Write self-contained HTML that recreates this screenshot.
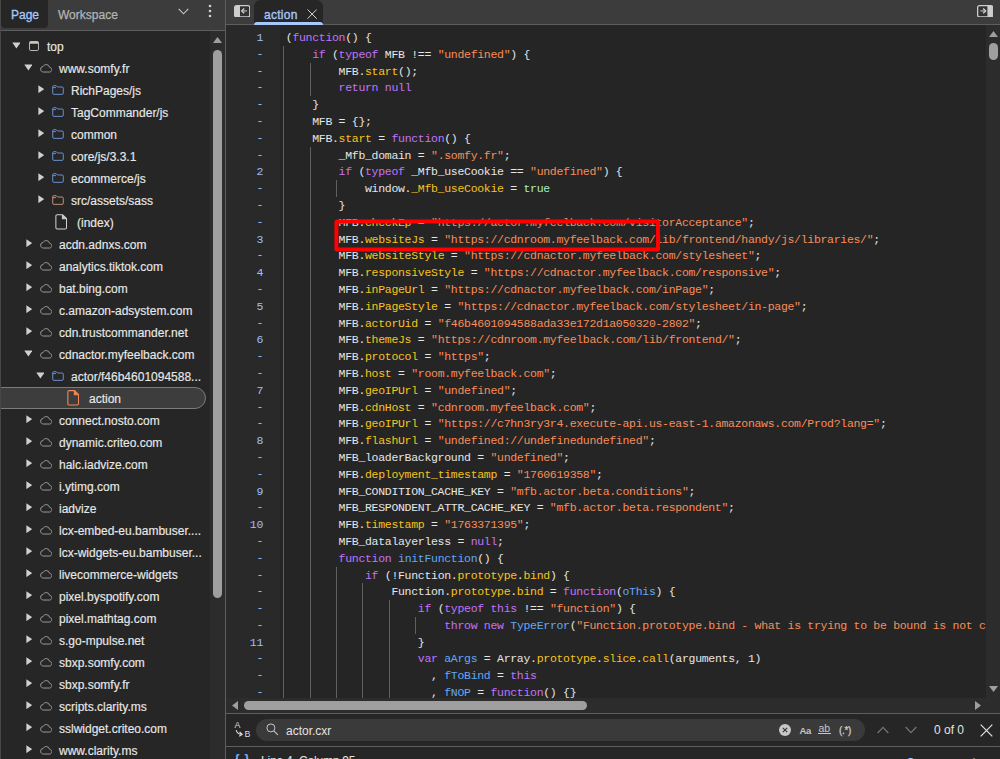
<!DOCTYPE html>
<html lang="en"><head><meta charset="utf-8"><title>DevTools - Sources</title>
<style>
*{box-sizing:border-box}
html,body{margin:0;padding:0;background:#262626}
body{width:1000px;height:759px;overflow:hidden;background:#262626;position:relative;font:12px/16px "Liberation Sans",sans-serif;color:#e3e3e3}
.abs{position:absolute}
/* left panel */
#left{position:absolute;left:0;top:0;width:225px;height:759px;background:#262626;overflow:hidden;border-left:1px solid #474747}
#ltabs{position:absolute;left:0;top:0;width:225px;height:31px;background:#3c3c3c;border-bottom:1px solid #5e5e5e}
#ptab{position:absolute;left:0;top:-4px;width:47px;height:32px;background:#262626;border-radius:4px;color:#a8c7fa;}
#ptab span{position:absolute;left:10px;top:11px;font-weight:normal;-webkit-text-stroke:0.3px #a8c7fa}
#wtab{position:absolute;left:57px;top:7px;color:#b4b4b4;-webkit-text-stroke:0.25px #b4b4b4}
.row{position:absolute;left:0;width:213px;height:22px}
.row.sel{left:-12px;width:218px;background:#3d3d3d;border:1px solid #7b7b7b;border-radius:11px;height:22px}
.row.sel .ic,.row.sel .tx{margin-left:11px;margin-top:-1px}
.row .ar,.row .ic{position:absolute}
  .row .tx{position:absolute;top:4px;white-space:nowrap;color:#e8e8e8;-webkit-text-stroke:0.15px}
#lscroll{position:absolute;left:209px;top:31px;width:16px;height:728px;background:#2c2c2c}
#lthumb{position:absolute;left:3px;top:19px;width:9px;height:548px;border-radius:4.5px;background:#9f9f9f}
#vdiv{position:absolute;left:225px;top:0;width:1px;height:759px;background:#5e5e5e}
/* right */
#rtabs{position:absolute;left:226px;top:0;width:774px;height:25px;background:#3c3c3c;border-bottom:1px solid #5e5e5e}
#atab{position:absolute;left:28px;top:0;width:69px;height:25px;background:#262626;border-radius:6.5px 6.5px 0 0;}
#atab span{position:absolute;left:10px;top:6.5px;color:#a8c7fa;-webkit-text-stroke:0.35px #a8c7fa;letter-spacing:0.28px}
#atab i{position:absolute;left:0;bottom:0;width:69px;height:3px;background:#a8c7fa;border-radius:3px 3px 0 0}
#editor{position:absolute;left:226px;top:25px;width:760px;height:673px;background:#252525;overflow:hidden}
#gutter{position:absolute;left:0;top:5px;width:37px;text-align:right;color:#9cc0fa;font:11.5px/16.8px "Liberation Mono",monospace;letter-spacing:-0.3px}
#gutter div{height:16.8px}
#gutter b{font-weight:normal;position:relative;top:-1px}
#code{position:absolute;left:59.8px;top:5px;font:11.5px/16.8px "Liberation Mono",monospace;letter-spacing:-0.3px;color:#e6e6e6}
.ln{height:16.8px;position:relative;white-space:pre}
.g{position:absolute;top:-1px;width:1px;height:16.8px;background:#606060}
.k{color:#c273fb}.p{color:#f6c31e}.s{color:#f98d59}.d{color:#62a8f8}.a{color:#a5f0c0}.t{color:#62a8f8}
#redbox{position:absolute;left:334.5px;top:219.5px;width:325.5px;height:32px;border:4px solid #fe0000;border-radius:1.5px}
#vscroll{position:absolute;left:986px;top:25px;width:14px;height:673px;background:#2c2c2c}
#vthumb{position:absolute;left:3px;top:18px;width:9px;height:17px;border-radius:4.5px;background:#9f9f9f}
#hscroll{position:absolute;left:226px;top:698px;width:774px;height:15px;background:#2c2c2c}
#hthumb{position:absolute;left:18px;top:3px;width:343px;height:9px;border-radius:4.5px;background:#9f9f9f}
.hline{position:absolute;left:226px;width:774px;height:1px;background:#5e5e5e}
#search{position:absolute;left:226px;top:714px;width:774px;height:32px;background:#262626}
#pill{position:absolute;left:30px;top:5px;width:609px;height:22px;border-radius:11px;background:#3a3a3a}
#status{position:absolute;left:226px;top:747px;width:774px;height:12px;background:#262626;overflow:hidden}
</style></head><body>
<div id="left">
 <div id="ltabs">
  <div id="ptab"><span>Page</span></div>
  <div id="wtab">Workspace</div>
  <svg class="abs" style="left:177px;top:7.5px" width="11" height="7" viewBox="0 0 11 7"><path d="M0.7 0.8 L5.5 5.8 L10.3 0.8" fill="none" stroke="#c7c7c7" stroke-width="1.1"/></svg>
  <svg class="abs" style="left:207px;top:4px" width="4" height="14" viewBox="0 0 4 14"><circle cx="2" cy="2" r="1.3" fill="#d0d0d0"/><circle cx="2" cy="7" r="1.3" fill="#d0d0d0"/><circle cx="2" cy="12" r="1.3" fill="#d0d0d0"/></svg>
 </div>
 <div style="position:absolute;left:-1px;top:0;width:226px;height:759px">
<div class="row" style="top:35px"><svg class="ar" style="left:11.5px;top:7px" width="8.8" height="6.7" viewBox="0 0 9 7"><path d="M0.2 0.4 H8.8 L4.5 6.8 Z" fill="#d0d0d0"/></svg><svg class="ic" style="left:29.0px;top:6.0px" width="10" height="10" viewBox="0 0 10 10"><rect x="0.5" y="0.5" width="9" height="9" rx="1.3" fill="none" stroke="#c7c7c7" stroke-width="0.9"/><rect x="0.5" y="0.5" width="9" height="2.2" rx="1" fill="#c7c7c7"/></svg><span class="tx" style="left:47px">top</span></div>
<div class="row" style="top:57px"><svg class="ar" style="left:23.5px;top:7px" width="8.8" height="6.7" viewBox="0 0 9 7"><path d="M0.2 0.4 H8.8 L4.5 6.8 Z" fill="#d0d0d0"/></svg><svg class="ic" style="left:39.8px;top:7.1px" width="12.4" height="8.6" viewBox="-1.2 2.8 26.4 18.4"><path d="M19.35 10.04A7.49 7.49 0 0 0 12 4C9.11 4 6.6 5.64 5.35 8.04A5.994 5.994 0 0 0 0 14c0 3.31 2.69 6 6 6h13c2.76 0 5-2.24 5-5 0-2.64-2.05-4.78-4.65-4.96z" fill="none" stroke="#a2a2a2" stroke-width="2"/></svg><span class="tx" style="left:59px">www.somfy.fr</span></div>
<div class="row" style="top:79px"><svg class="ar" style="left:37.5px;top:5.6px" width="6.4" height="8.4" viewBox="0 0 7 9"><path d="M0.4 0.2 V8.8 L6.8 4.5 Z" fill="#d0d0d0"/></svg><svg class="ic" style="left:52.0px;top:6.2px" width="12" height="10" viewBox="0 0 13 11"><path d="M1.5 0.8 H4.6 L5.9 2.2 H11 Q12.3 2.2 12.3 3.5 V9 Q12.3 10.3 11 10.3 H2 Q0.7 10.3 0.7 9 V1.8 Q0.7 0.8 1.5 0.8 Z M0.7 2.9 H4.2" fill="none" stroke="#6f9be0" stroke-width="1"/></svg><span class="tx" style="left:71px">RichPages/js</span></div>
<div class="row" style="top:101px"><svg class="ar" style="left:37.5px;top:5.6px" width="6.4" height="8.4" viewBox="0 0 7 9"><path d="M0.4 0.2 V8.8 L6.8 4.5 Z" fill="#d0d0d0"/></svg><svg class="ic" style="left:52.0px;top:6.2px" width="12" height="10" viewBox="0 0 13 11"><path d="M1.5 0.8 H4.6 L5.9 2.2 H11 Q12.3 2.2 12.3 3.5 V9 Q12.3 10.3 11 10.3 H2 Q0.7 10.3 0.7 9 V1.8 Q0.7 0.8 1.5 0.8 Z M0.7 2.9 H4.2" fill="none" stroke="#6f9be0" stroke-width="1"/></svg><span class="tx" style="left:71px">TagCommander/js</span></div>
<div class="row" style="top:123px"><svg class="ar" style="left:37.5px;top:5.6px" width="6.4" height="8.4" viewBox="0 0 7 9"><path d="M0.4 0.2 V8.8 L6.8 4.5 Z" fill="#d0d0d0"/></svg><svg class="ic" style="left:52.0px;top:6.2px" width="12" height="10" viewBox="0 0 13 11"><path d="M1.5 0.8 H4.6 L5.9 2.2 H11 Q12.3 2.2 12.3 3.5 V9 Q12.3 10.3 11 10.3 H2 Q0.7 10.3 0.7 9 V1.8 Q0.7 0.8 1.5 0.8 Z M0.7 2.9 H4.2" fill="none" stroke="#6f9be0" stroke-width="1"/></svg><span class="tx" style="left:71px">common</span></div>
<div class="row" style="top:145px"><svg class="ar" style="left:37.5px;top:5.6px" width="6.4" height="8.4" viewBox="0 0 7 9"><path d="M0.4 0.2 V8.8 L6.8 4.5 Z" fill="#d0d0d0"/></svg><svg class="ic" style="left:52.0px;top:6.2px" width="12" height="10" viewBox="0 0 13 11"><path d="M1.5 0.8 H4.6 L5.9 2.2 H11 Q12.3 2.2 12.3 3.5 V9 Q12.3 10.3 11 10.3 H2 Q0.7 10.3 0.7 9 V1.8 Q0.7 0.8 1.5 0.8 Z M0.7 2.9 H4.2" fill="none" stroke="#6f9be0" stroke-width="1"/></svg><span class="tx" style="left:71px">core/js/3.3.1</span></div>
<div class="row" style="top:167px"><svg class="ar" style="left:37.5px;top:5.6px" width="6.4" height="8.4" viewBox="0 0 7 9"><path d="M0.4 0.2 V8.8 L6.8 4.5 Z" fill="#d0d0d0"/></svg><svg class="ic" style="left:52.0px;top:6.2px" width="12" height="10" viewBox="0 0 13 11"><path d="M1.5 0.8 H4.6 L5.9 2.2 H11 Q12.3 2.2 12.3 3.5 V9 Q12.3 10.3 11 10.3 H2 Q0.7 10.3 0.7 9 V1.8 Q0.7 0.8 1.5 0.8 Z M0.7 2.9 H4.2" fill="none" stroke="#6f9be0" stroke-width="1"/></svg><span class="tx" style="left:71px">ecommerce/js</span></div>
<div class="row" style="top:189px"><svg class="ar" style="left:37.5px;top:5.6px" width="6.4" height="8.4" viewBox="0 0 7 9"><path d="M0.4 0.2 V8.8 L6.8 4.5 Z" fill="#d0d0d0"/></svg><svg class="ic" style="left:52.0px;top:6.2px" width="12" height="10" viewBox="0 0 13 11"><path d="M1.5 0.8 H4.6 L5.9 2.2 H11 Q12.3 2.2 12.3 3.5 V9 Q12.3 10.3 11 10.3 H2 Q0.7 10.3 0.7 9 V1.8 Q0.7 0.8 1.5 0.8 Z M0.7 2.9 H4.2" fill="none" stroke="#d19a82" stroke-width="1"/></svg><span class="tx" style="left:71px">src/assets/sass</span></div>
<div class="row" style="top:211px"><svg class="ic" style="left:54.8px;top:3.2px" width="12.4" height="15.6" viewBox="0 0 13 17"><path d="M2 0.7 H8 L12.3 5 V15 Q12.3 16.3 11 16.3 H2 Q0.7 16.3 0.7 15 V2 Q0.7 0.7 2 0.7 Z M7.8 0.9 V5.2 H12.1" fill="none" stroke="#d2d2d2" stroke-width="1.1"/><path d="M8 1 L12 5 H8 Z" fill="#d2d2d2"/></svg><span class="tx" style="left:77px">(index)</span></div>
<div class="row" style="top:233px"><svg class="ar" style="left:25.5px;top:5.6px" width="6.4" height="8.4" viewBox="0 0 7 9"><path d="M0.4 0.2 V8.8 L6.8 4.5 Z" fill="#d0d0d0"/></svg><svg class="ic" style="left:39.8px;top:7.1px" width="12.4" height="8.6" viewBox="-1.2 2.8 26.4 18.4"><path d="M19.35 10.04A7.49 7.49 0 0 0 12 4C9.11 4 6.6 5.64 5.35 8.04A5.994 5.994 0 0 0 0 14c0 3.31 2.69 6 6 6h13c2.76 0 5-2.24 5-5 0-2.64-2.05-4.78-4.65-4.96z" fill="none" stroke="#a2a2a2" stroke-width="2"/></svg><span class="tx" style="left:59px">acdn.adnxs.com</span></div>
<div class="row" style="top:255px"><svg class="ar" style="left:25.5px;top:5.6px" width="6.4" height="8.4" viewBox="0 0 7 9"><path d="M0.4 0.2 V8.8 L6.8 4.5 Z" fill="#d0d0d0"/></svg><svg class="ic" style="left:39.8px;top:7.1px" width="12.4" height="8.6" viewBox="-1.2 2.8 26.4 18.4"><path d="M19.35 10.04A7.49 7.49 0 0 0 12 4C9.11 4 6.6 5.64 5.35 8.04A5.994 5.994 0 0 0 0 14c0 3.31 2.69 6 6 6h13c2.76 0 5-2.24 5-5 0-2.64-2.05-4.78-4.65-4.96z" fill="none" stroke="#a2a2a2" stroke-width="2"/></svg><span class="tx" style="left:59px">analytics.tiktok.com</span></div>
<div class="row" style="top:277px"><svg class="ar" style="left:25.5px;top:5.6px" width="6.4" height="8.4" viewBox="0 0 7 9"><path d="M0.4 0.2 V8.8 L6.8 4.5 Z" fill="#d0d0d0"/></svg><svg class="ic" style="left:39.8px;top:7.1px" width="12.4" height="8.6" viewBox="-1.2 2.8 26.4 18.4"><path d="M19.35 10.04A7.49 7.49 0 0 0 12 4C9.11 4 6.6 5.64 5.35 8.04A5.994 5.994 0 0 0 0 14c0 3.31 2.69 6 6 6h13c2.76 0 5-2.24 5-5 0-2.64-2.05-4.78-4.65-4.96z" fill="none" stroke="#a2a2a2" stroke-width="2"/></svg><span class="tx" style="left:59px">bat.bing.com</span></div>
<div class="row" style="top:299px"><svg class="ar" style="left:25.5px;top:5.6px" width="6.4" height="8.4" viewBox="0 0 7 9"><path d="M0.4 0.2 V8.8 L6.8 4.5 Z" fill="#d0d0d0"/></svg><svg class="ic" style="left:39.8px;top:7.1px" width="12.4" height="8.6" viewBox="-1.2 2.8 26.4 18.4"><path d="M19.35 10.04A7.49 7.49 0 0 0 12 4C9.11 4 6.6 5.64 5.35 8.04A5.994 5.994 0 0 0 0 14c0 3.31 2.69 6 6 6h13c2.76 0 5-2.24 5-5 0-2.64-2.05-4.78-4.65-4.96z" fill="none" stroke="#a2a2a2" stroke-width="2"/></svg><span class="tx" style="left:59px">c.amazon-adsystem.com</span></div>
<div class="row" style="top:321px"><svg class="ar" style="left:25.5px;top:5.6px" width="6.4" height="8.4" viewBox="0 0 7 9"><path d="M0.4 0.2 V8.8 L6.8 4.5 Z" fill="#d0d0d0"/></svg><svg class="ic" style="left:39.8px;top:7.1px" width="12.4" height="8.6" viewBox="-1.2 2.8 26.4 18.4"><path d="M19.35 10.04A7.49 7.49 0 0 0 12 4C9.11 4 6.6 5.64 5.35 8.04A5.994 5.994 0 0 0 0 14c0 3.31 2.69 6 6 6h13c2.76 0 5-2.24 5-5 0-2.64-2.05-4.78-4.65-4.96z" fill="none" stroke="#a2a2a2" stroke-width="2"/></svg><span class="tx" style="left:59px">cdn.trustcommander.net</span></div>
<div class="row" style="top:343px"><svg class="ar" style="left:23.5px;top:7px" width="8.8" height="6.7" viewBox="0 0 9 7"><path d="M0.2 0.4 H8.8 L4.5 6.8 Z" fill="#d0d0d0"/></svg><svg class="ic" style="left:39.8px;top:7.1px" width="12.4" height="8.6" viewBox="-1.2 2.8 26.4 18.4"><path d="M19.35 10.04A7.49 7.49 0 0 0 12 4C9.11 4 6.6 5.64 5.35 8.04A5.994 5.994 0 0 0 0 14c0 3.31 2.69 6 6 6h13c2.76 0 5-2.24 5-5 0-2.64-2.05-4.78-4.65-4.96z" fill="none" stroke="#a2a2a2" stroke-width="2"/></svg><span class="tx" style="left:59px">cdnactor.myfeelback.com</span></div>
<div class="row" style="top:365px"><svg class="ar" style="left:35.5px;top:7px" width="8.8" height="6.7" viewBox="0 0 9 7"><path d="M0.2 0.4 H8.8 L4.5 6.8 Z" fill="#d0d0d0"/></svg><svg class="ic" style="left:52.0px;top:6.2px" width="12" height="10" viewBox="0 0 13 11"><path d="M1.5 0.8 H4.6 L5.9 2.2 H11 Q12.3 2.2 12.3 3.5 V9 Q12.3 10.3 11 10.3 H2 Q0.7 10.3 0.7 9 V1.8 Q0.7 0.8 1.5 0.8 Z M0.7 2.9 H4.2" fill="none" stroke="#6f9be0" stroke-width="1"/></svg><span class="tx" style="left:71px">actor/f46b4601094588...</span></div>
<div class="row sel" style="top:387px"><svg class="ic" style="left:66.8px;top:3.2px" width="12.4" height="15.6" viewBox="0 0 13 17"><path d="M2 0.7 H8 L12.3 5 V15 Q12.3 16.3 11 16.3 H2 Q0.7 16.3 0.7 15 V2 Q0.7 0.7 2 0.7 Z M7.8 0.9 V5.2 H12.1" fill="none" stroke="#ee8a55" stroke-width="1.2"/><path d="M8 1 L12 5 H8 Z" fill="#ee8a55"/></svg><span class="tx" style="left:89px">action</span></div>
<div class="row" style="top:409px"><svg class="ar" style="left:25.5px;top:5.6px" width="6.4" height="8.4" viewBox="0 0 7 9"><path d="M0.4 0.2 V8.8 L6.8 4.5 Z" fill="#d0d0d0"/></svg><svg class="ic" style="left:39.8px;top:7.1px" width="12.4" height="8.6" viewBox="-1.2 2.8 26.4 18.4"><path d="M19.35 10.04A7.49 7.49 0 0 0 12 4C9.11 4 6.6 5.64 5.35 8.04A5.994 5.994 0 0 0 0 14c0 3.31 2.69 6 6 6h13c2.76 0 5-2.24 5-5 0-2.64-2.05-4.78-4.65-4.96z" fill="none" stroke="#a2a2a2" stroke-width="2"/></svg><span class="tx" style="left:59px">connect.nosto.com</span></div>
<div class="row" style="top:431px"><svg class="ar" style="left:25.5px;top:5.6px" width="6.4" height="8.4" viewBox="0 0 7 9"><path d="M0.4 0.2 V8.8 L6.8 4.5 Z" fill="#d0d0d0"/></svg><svg class="ic" style="left:39.8px;top:7.1px" width="12.4" height="8.6" viewBox="-1.2 2.8 26.4 18.4"><path d="M19.35 10.04A7.49 7.49 0 0 0 12 4C9.11 4 6.6 5.64 5.35 8.04A5.994 5.994 0 0 0 0 14c0 3.31 2.69 6 6 6h13c2.76 0 5-2.24 5-5 0-2.64-2.05-4.78-4.65-4.96z" fill="none" stroke="#a2a2a2" stroke-width="2"/></svg><span class="tx" style="left:59px">dynamic.criteo.com</span></div>
<div class="row" style="top:453px"><svg class="ar" style="left:25.5px;top:5.6px" width="6.4" height="8.4" viewBox="0 0 7 9"><path d="M0.4 0.2 V8.8 L6.8 4.5 Z" fill="#d0d0d0"/></svg><svg class="ic" style="left:39.8px;top:7.1px" width="12.4" height="8.6" viewBox="-1.2 2.8 26.4 18.4"><path d="M19.35 10.04A7.49 7.49 0 0 0 12 4C9.11 4 6.6 5.64 5.35 8.04A5.994 5.994 0 0 0 0 14c0 3.31 2.69 6 6 6h13c2.76 0 5-2.24 5-5 0-2.64-2.05-4.78-4.65-4.96z" fill="none" stroke="#a2a2a2" stroke-width="2"/></svg><span class="tx" style="left:59px">halc.iadvize.com</span></div>
<div class="row" style="top:475px"><svg class="ar" style="left:25.5px;top:5.6px" width="6.4" height="8.4" viewBox="0 0 7 9"><path d="M0.4 0.2 V8.8 L6.8 4.5 Z" fill="#d0d0d0"/></svg><svg class="ic" style="left:39.8px;top:7.1px" width="12.4" height="8.6" viewBox="-1.2 2.8 26.4 18.4"><path d="M19.35 10.04A7.49 7.49 0 0 0 12 4C9.11 4 6.6 5.64 5.35 8.04A5.994 5.994 0 0 0 0 14c0 3.31 2.69 6 6 6h13c2.76 0 5-2.24 5-5 0-2.64-2.05-4.78-4.65-4.96z" fill="none" stroke="#a2a2a2" stroke-width="2"/></svg><span class="tx" style="left:59px">i.ytimg.com</span></div>
<div class="row" style="top:497px"><svg class="ar" style="left:25.5px;top:5.6px" width="6.4" height="8.4" viewBox="0 0 7 9"><path d="M0.4 0.2 V8.8 L6.8 4.5 Z" fill="#d0d0d0"/></svg><svg class="ic" style="left:39.8px;top:7.1px" width="12.4" height="8.6" viewBox="-1.2 2.8 26.4 18.4"><path d="M19.35 10.04A7.49 7.49 0 0 0 12 4C9.11 4 6.6 5.64 5.35 8.04A5.994 5.994 0 0 0 0 14c0 3.31 2.69 6 6 6h13c2.76 0 5-2.24 5-5 0-2.64-2.05-4.78-4.65-4.96z" fill="none" stroke="#a2a2a2" stroke-width="2"/></svg><span class="tx" style="left:59px">iadvize</span></div>
<div class="row" style="top:519px"><svg class="ar" style="left:25.5px;top:5.6px" width="6.4" height="8.4" viewBox="0 0 7 9"><path d="M0.4 0.2 V8.8 L6.8 4.5 Z" fill="#d0d0d0"/></svg><svg class="ic" style="left:39.8px;top:7.1px" width="12.4" height="8.6" viewBox="-1.2 2.8 26.4 18.4"><path d="M19.35 10.04A7.49 7.49 0 0 0 12 4C9.11 4 6.6 5.64 5.35 8.04A5.994 5.994 0 0 0 0 14c0 3.31 2.69 6 6 6h13c2.76 0 5-2.24 5-5 0-2.64-2.05-4.78-4.65-4.96z" fill="none" stroke="#a2a2a2" stroke-width="2"/></svg><span class="tx" style="left:59px">lcx-embed-eu.bambuser....</span></div>
<div class="row" style="top:541px"><svg class="ar" style="left:25.5px;top:5.6px" width="6.4" height="8.4" viewBox="0 0 7 9"><path d="M0.4 0.2 V8.8 L6.8 4.5 Z" fill="#d0d0d0"/></svg><svg class="ic" style="left:39.8px;top:7.1px" width="12.4" height="8.6" viewBox="-1.2 2.8 26.4 18.4"><path d="M19.35 10.04A7.49 7.49 0 0 0 12 4C9.11 4 6.6 5.64 5.35 8.04A5.994 5.994 0 0 0 0 14c0 3.31 2.69 6 6 6h13c2.76 0 5-2.24 5-5 0-2.64-2.05-4.78-4.65-4.96z" fill="none" stroke="#a2a2a2" stroke-width="2"/></svg><span class="tx" style="left:59px">lcx-widgets-eu.bambuser...</span></div>
<div class="row" style="top:563px"><svg class="ar" style="left:25.5px;top:5.6px" width="6.4" height="8.4" viewBox="0 0 7 9"><path d="M0.4 0.2 V8.8 L6.8 4.5 Z" fill="#d0d0d0"/></svg><svg class="ic" style="left:39.8px;top:7.1px" width="12.4" height="8.6" viewBox="-1.2 2.8 26.4 18.4"><path d="M19.35 10.04A7.49 7.49 0 0 0 12 4C9.11 4 6.6 5.64 5.35 8.04A5.994 5.994 0 0 0 0 14c0 3.31 2.69 6 6 6h13c2.76 0 5-2.24 5-5 0-2.64-2.05-4.78-4.65-4.96z" fill="none" stroke="#a2a2a2" stroke-width="2"/></svg><span class="tx" style="left:59px">livecommerce-widgets</span></div>
<div class="row" style="top:585px"><svg class="ar" style="left:25.5px;top:5.6px" width="6.4" height="8.4" viewBox="0 0 7 9"><path d="M0.4 0.2 V8.8 L6.8 4.5 Z" fill="#d0d0d0"/></svg><svg class="ic" style="left:39.8px;top:7.1px" width="12.4" height="8.6" viewBox="-1.2 2.8 26.4 18.4"><path d="M19.35 10.04A7.49 7.49 0 0 0 12 4C9.11 4 6.6 5.64 5.35 8.04A5.994 5.994 0 0 0 0 14c0 3.31 2.69 6 6 6h13c2.76 0 5-2.24 5-5 0-2.64-2.05-4.78-4.65-4.96z" fill="none" stroke="#a2a2a2" stroke-width="2"/></svg><span class="tx" style="left:59px">pixel.byspotify.com</span></div>
<div class="row" style="top:607px"><svg class="ar" style="left:25.5px;top:5.6px" width="6.4" height="8.4" viewBox="0 0 7 9"><path d="M0.4 0.2 V8.8 L6.8 4.5 Z" fill="#d0d0d0"/></svg><svg class="ic" style="left:39.8px;top:7.1px" width="12.4" height="8.6" viewBox="-1.2 2.8 26.4 18.4"><path d="M19.35 10.04A7.49 7.49 0 0 0 12 4C9.11 4 6.6 5.64 5.35 8.04A5.994 5.994 0 0 0 0 14c0 3.31 2.69 6 6 6h13c2.76 0 5-2.24 5-5 0-2.64-2.05-4.78-4.65-4.96z" fill="none" stroke="#a2a2a2" stroke-width="2"/></svg><span class="tx" style="left:59px">pixel.mathtag.com</span></div>
<div class="row" style="top:629px"><svg class="ar" style="left:25.5px;top:5.6px" width="6.4" height="8.4" viewBox="0 0 7 9"><path d="M0.4 0.2 V8.8 L6.8 4.5 Z" fill="#d0d0d0"/></svg><svg class="ic" style="left:39.8px;top:7.1px" width="12.4" height="8.6" viewBox="-1.2 2.8 26.4 18.4"><path d="M19.35 10.04A7.49 7.49 0 0 0 12 4C9.11 4 6.6 5.64 5.35 8.04A5.994 5.994 0 0 0 0 14c0 3.31 2.69 6 6 6h13c2.76 0 5-2.24 5-5 0-2.64-2.05-4.78-4.65-4.96z" fill="none" stroke="#a2a2a2" stroke-width="2"/></svg><span class="tx" style="left:59px">s.go-mpulse.net</span></div>
<div class="row" style="top:651px"><svg class="ar" style="left:25.5px;top:5.6px" width="6.4" height="8.4" viewBox="0 0 7 9"><path d="M0.4 0.2 V8.8 L6.8 4.5 Z" fill="#d0d0d0"/></svg><svg class="ic" style="left:39.8px;top:7.1px" width="12.4" height="8.6" viewBox="-1.2 2.8 26.4 18.4"><path d="M19.35 10.04A7.49 7.49 0 0 0 12 4C9.11 4 6.6 5.64 5.35 8.04A5.994 5.994 0 0 0 0 14c0 3.31 2.69 6 6 6h13c2.76 0 5-2.24 5-5 0-2.64-2.05-4.78-4.65-4.96z" fill="none" stroke="#a2a2a2" stroke-width="2"/></svg><span class="tx" style="left:59px">sbxp.somfy.com</span></div>
<div class="row" style="top:673px"><svg class="ar" style="left:25.5px;top:5.6px" width="6.4" height="8.4" viewBox="0 0 7 9"><path d="M0.4 0.2 V8.8 L6.8 4.5 Z" fill="#d0d0d0"/></svg><svg class="ic" style="left:39.8px;top:7.1px" width="12.4" height="8.6" viewBox="-1.2 2.8 26.4 18.4"><path d="M19.35 10.04A7.49 7.49 0 0 0 12 4C9.11 4 6.6 5.64 5.35 8.04A5.994 5.994 0 0 0 0 14c0 3.31 2.69 6 6 6h13c2.76 0 5-2.24 5-5 0-2.64-2.05-4.78-4.65-4.96z" fill="none" stroke="#a2a2a2" stroke-width="2"/></svg><span class="tx" style="left:59px">sbxp.somfy.fr</span></div>
<div class="row" style="top:695px"><svg class="ar" style="left:25.5px;top:5.6px" width="6.4" height="8.4" viewBox="0 0 7 9"><path d="M0.4 0.2 V8.8 L6.8 4.5 Z" fill="#d0d0d0"/></svg><svg class="ic" style="left:39.8px;top:7.1px" width="12.4" height="8.6" viewBox="-1.2 2.8 26.4 18.4"><path d="M19.35 10.04A7.49 7.49 0 0 0 12 4C9.11 4 6.6 5.64 5.35 8.04A5.994 5.994 0 0 0 0 14c0 3.31 2.69 6 6 6h13c2.76 0 5-2.24 5-5 0-2.64-2.05-4.78-4.65-4.96z" fill="none" stroke="#a2a2a2" stroke-width="2"/></svg><span class="tx" style="left:59px">scripts.clarity.ms</span></div>
<div class="row" style="top:717px"><svg class="ar" style="left:25.5px;top:5.6px" width="6.4" height="8.4" viewBox="0 0 7 9"><path d="M0.4 0.2 V8.8 L6.8 4.5 Z" fill="#d0d0d0"/></svg><svg class="ic" style="left:39.8px;top:7.1px" width="12.4" height="8.6" viewBox="-1.2 2.8 26.4 18.4"><path d="M19.35 10.04A7.49 7.49 0 0 0 12 4C9.11 4 6.6 5.64 5.35 8.04A5.994 5.994 0 0 0 0 14c0 3.31 2.69 6 6 6h13c2.76 0 5-2.24 5-5 0-2.64-2.05-4.78-4.65-4.96z" fill="none" stroke="#a2a2a2" stroke-width="2"/></svg><span class="tx" style="left:59px">sslwidget.criteo.com</span></div>
<div class="row" style="top:739px"><svg class="ar" style="left:25.5px;top:5.6px" width="6.4" height="8.4" viewBox="0 0 7 9"><path d="M0.4 0.2 V8.8 L6.8 4.5 Z" fill="#d0d0d0"/></svg><svg class="ic" style="left:39.8px;top:7.1px" width="12.4" height="8.6" viewBox="-1.2 2.8 26.4 18.4"><path d="M19.35 10.04A7.49 7.49 0 0 0 12 4C9.11 4 6.6 5.64 5.35 8.04A5.994 5.994 0 0 0 0 14c0 3.31 2.69 6 6 6h13c2.76 0 5-2.24 5-5 0-2.64-2.05-4.78-4.65-4.96z" fill="none" stroke="#a2a2a2" stroke-width="2"/></svg><span class="tx" style="left:59px">www.clarity.ms</span></div>

 </div>
 <div id="lscroll">
  <svg class="abs" style="left:3px;top:6px" width="9" height="6" viewBox="0 0 9 6"><path d="M4.5 0 L9 6 H0 Z" fill="#9f9f9f"/></svg>
  <div id="lthumb"></div>
 </div>
</div>
<div id="vdiv"></div>
<div id="rtabs">
 <svg class="abs" style="left:8px;top:4.7px" width="16.4" height="12.6" viewBox="0 0 16.4 12.6"><rect x="0.65" y="0.65" width="15.1" height="11.3" rx="1.8" fill="#323232" stroke="#cdcdcd" stroke-width="1.3"/><path d="M0.65 2.4 Q0.65 0.65 2.4 0.65 H6 V11.95 H2.4 Q0.65 11.95 0.65 10.2 Z" fill="#cdcdcd"/><path d="M10.2 3.6 L7.7 5.9 L10.2 8.2" fill="none" stroke="#d6d6d6" stroke-width="1.3"/><path d="M8.6 5.9 H13" fill="none" stroke="#b0b0b0" stroke-width="1.3"/></svg>
 <div id="atab"><span>action</span><i></i>
  <svg class="abs" style="left:53px;top:8.8px" width="10.2" height="10.2" viewBox="0 0 10.2 10.2"><path d="M0.5 0.5 L9.7 9.7 M9.7 0.5 L0.5 9.7" stroke="#d6d6d6" stroke-width="1"/></svg>
 </div>
 <svg class="abs" style="left:751px;top:4.7px" width="16.4" height="12.6" viewBox="0 0 16.4 12.6"><rect x="0.65" y="0.65" width="15.1" height="11.3" rx="1.8" fill="#323232" stroke="#cdcdcd" stroke-width="1.3"/><path d="M15.75 2.4 Q15.75 0.65 14 0.65 H10.4 V11.95 H14 Q15.75 11.95 15.75 10.2 Z" fill="#cdcdcd"/><path d="M6.2 3.6 L8.7 5.9 L6.2 8.2" fill="none" stroke="#d6d6d6" stroke-width="1.3"/><path d="M7.8 5.9 H3.4" fill="none" stroke="#b0b0b0" stroke-width="1.3"/></svg>
</div>
<div id="editor">
 <div class="abs" style="left:0;top:0;width:54px;height:673px;background:#292929"></div>
 <div id="gutter"><div>1</div><div><b>-</b></div><div><b>-</b></div><div><b>-</b></div><div><b>-</b></div><div><b>-</b></div><div><b>-</b></div><div><b>-</b></div><div>2</div><div><b>-</b></div><div><b>-</b></div><div><b>-</b></div><div>3</div><div><b>-</b></div><div>4</div><div><b>-</b></div><div>5</div><div><b>-</b></div><div>6</div><div><b>-</b></div><div><b>-</b></div><div>7</div><div><b>-</b></div><div><b>-</b></div><div>8</div><div><b>-</b></div><div><b>-</b></div><div>9</div><div><b>-</b></div><div>10</div><div><b>-</b></div><div><b>-</b></div><div><b>-</b></div><div><b>-</b></div><div><b>-</b></div><div><b>-</b></div><div>11</div><div><b>-</b></div><div><b>-</b></div><div><b>-</b></div></div>
 <div id="code">
<div class="ln">(<span class="k">function</span>() {</div>
<div class="ln"><i class="g" style="left:-2.6px"></i>    <span class="k">if</span> (<span class="k">typeof</span> MFB !== <span class="s">"undefined"</span>) {</div>
<div class="ln"><i class="g" style="left:-2.6px"></i><i class="g" style="left:23.8px"></i>        MFB.<span class="p">start</span>();</div>
<div class="ln"><i class="g" style="left:-2.6px"></i><i class="g" style="left:23.8px"></i>        <span class="k">return</span> <span class="k">null</span></div>
<div class="ln"><i class="g" style="left:-2.6px"></i>    }</div>
<div class="ln"><i class="g" style="left:-2.6px"></i>    MFB = {};</div>
<div class="ln"><i class="g" style="left:-2.6px"></i>    MFB.<span class="p">start</span> = <span class="k">function</span>() {</div>
<div class="ln"><i class="g" style="left:-2.6px"></i><i class="g" style="left:23.8px"></i>        _Mfb_domain = <span class="s">".somfy.fr"</span>;</div>
<div class="ln"><i class="g" style="left:-2.6px"></i><i class="g" style="left:23.8px"></i>        <span class="k">if</span> (<span class="k">typeof</span> _Mfb_useCookie == <span class="s">"undefined"</span>) {</div>
<div class="ln"><i class="g" style="left:-2.6px"></i><i class="g" style="left:23.8px"></i><i class="g" style="left:50.2px"></i>            window.<span class="p">_Mfb_useCookie</span> = <span class="a">true</span></div>
<div class="ln"><i class="g" style="left:-2.6px"></i><i class="g" style="left:23.8px"></i>        }</div>
<div class="ln"><i class="g" style="left:-2.6px"></i><i class="g" style="left:23.8px"></i>        MFB.<span class="p">checkEp</span> = <span class="s">"https://actor.myfeelback.com/visitorAcceptance"</span>;</div>
<div class="ln"><i class="g" style="left:-2.6px"></i><i class="g" style="left:23.8px"></i>        MFB.<span class="p">websiteJs</span> = <span class="s">"https://cdnroom.myfeelback.com/lib/frontend/handy/js/libraries/"</span>;</div>
<div class="ln"><i class="g" style="left:-2.6px"></i><i class="g" style="left:23.8px"></i>        MFB.<span class="p">websiteStyle</span> = <span class="s">"https://cdnactor.myfeelback.com/stylesheet"</span>;</div>
<div class="ln"><i class="g" style="left:-2.6px"></i><i class="g" style="left:23.8px"></i>        MFB.<span class="p">responsiveStyle</span> = <span class="s">"https://cdnactor.myfeelback.com/responsive"</span>;</div>
<div class="ln"><i class="g" style="left:-2.6px"></i><i class="g" style="left:23.8px"></i>        MFB.<span class="p">inPageUrl</span> = <span class="s">"https://cdnactor.myfeelback.com/inPage"</span>;</div>
<div class="ln"><i class="g" style="left:-2.6px"></i><i class="g" style="left:23.8px"></i>        MFB.<span class="p">inPageStyle</span> = <span class="s">"https://cdnactor.myfeelback.com/stylesheet/in-page"</span>;</div>
<div class="ln"><i class="g" style="left:-2.6px"></i><i class="g" style="left:23.8px"></i>        MFB.<span class="p">actorUid</span> = <span class="s">"f46b4601094588ada33e172d1a050320-2802"</span>;</div>
<div class="ln"><i class="g" style="left:-2.6px"></i><i class="g" style="left:23.8px"></i>        MFB.<span class="p">themeJs</span> = <span class="s">"https://cdnroom.myfeelback.com/lib/frontend/"</span>;</div>
<div class="ln"><i class="g" style="left:-2.6px"></i><i class="g" style="left:23.8px"></i>        MFB.<span class="p">protocol</span> = <span class="s">"https"</span>;</div>
<div class="ln"><i class="g" style="left:-2.6px"></i><i class="g" style="left:23.8px"></i>        MFB.<span class="p">host</span> = <span class="s">"room.myfeelback.com"</span>;</div>
<div class="ln"><i class="g" style="left:-2.6px"></i><i class="g" style="left:23.8px"></i>        MFB.<span class="p">geoIPUrl</span> = <span class="s">"undefined"</span>;</div>
<div class="ln"><i class="g" style="left:-2.6px"></i><i class="g" style="left:23.8px"></i>        MFB.<span class="p">cdnHost</span> = <span class="s">"cdnroom.myfeelback.com"</span>;</div>
<div class="ln"><i class="g" style="left:-2.6px"></i><i class="g" style="left:23.8px"></i>        MFB.<span class="p">geoIPUrl</span> = <span class="s">"https://c7hn3ry3r4.execute-api.us-east-1.amazonaws.com/Prod?lang="</span>;</div>
<div class="ln"><i class="g" style="left:-2.6px"></i><i class="g" style="left:23.8px"></i>        MFB.<span class="p">flashUrl</span> = <span class="s">"undefined://undefinedundefined"</span>;</div>
<div class="ln"><i class="g" style="left:-2.6px"></i><i class="g" style="left:23.8px"></i>        MFB_loaderBackground = <span class="s">"undefined"</span>;</div>
<div class="ln"><i class="g" style="left:-2.6px"></i><i class="g" style="left:23.8px"></i>        MFB.<span class="p">deployment_timestamp</span> = <span class="s">"1760619358"</span>;</div>
<div class="ln"><i class="g" style="left:-2.6px"></i><i class="g" style="left:23.8px"></i>        MFB_CONDITION_CACHE_KEY = <span class="s">"mfb.actor.beta.conditions"</span>;</div>
<div class="ln"><i class="g" style="left:-2.6px"></i><i class="g" style="left:23.8px"></i>        MFB_RESPONDENT_ATTR_CACHE_KEY = <span class="s">"mfb.actor.beta.respondent"</span>;</div>
<div class="ln"><i class="g" style="left:-2.6px"></i><i class="g" style="left:23.8px"></i>        MFB.<span class="p">timestamp</span> = <span class="s">"1763371395"</span>;</div>
<div class="ln"><i class="g" style="left:-2.6px"></i><i class="g" style="left:23.8px"></i>        MFB_datalayerless = <span class="k">null</span>;</div>
<div class="ln"><i class="g" style="left:-2.6px"></i><i class="g" style="left:23.8px"></i>        <span class="k">function</span> <span class="d">initFunction</span>() {</div>
<div class="ln"><i class="g" style="left:-2.6px"></i><i class="g" style="left:23.8px"></i><i class="g" style="left:50.2px"></i>            <span class="k">if</span> (!Function.<span class="p">prototype</span>.<span class="p">bind</span>) {</div>
<div class="ln"><i class="g" style="left:-2.6px"></i><i class="g" style="left:23.8px"></i><i class="g" style="left:50.2px"></i><i class="g" style="left:76.6px"></i>                Function.<span class="p">prototype</span>.<span class="p">bind</span> = <span class="k">function</span>(<span class="d">oThis</span>) {</div>
<div class="ln"><i class="g" style="left:-2.6px"></i><i class="g" style="left:23.8px"></i><i class="g" style="left:50.2px"></i><i class="g" style="left:76.6px"></i><i class="g" style="left:103.0px"></i>                    <span class="k">if</span> (<span class="k">typeof</span> <span class="k">this</span> !== <span class="s">"function"</span>) {</div>
<div class="ln"><i class="g" style="left:-2.6px"></i><i class="g" style="left:23.8px"></i><i class="g" style="left:50.2px"></i><i class="g" style="left:76.6px"></i><i class="g" style="left:103.0px"></i><i class="g" style="left:129.4px"></i>                        <span class="k">throw</span> <span class="k">new</span> <span class="t">TypeError</span>(<span class="s">"Function.prototype.bind - what is trying to be bound is not callable"</span>);</div>
<div class="ln"><i class="g" style="left:-2.6px"></i><i class="g" style="left:23.8px"></i><i class="g" style="left:50.2px"></i><i class="g" style="left:76.6px"></i><i class="g" style="left:103.0px"></i>                    }</div>
<div class="ln"><i class="g" style="left:-2.6px"></i><i class="g" style="left:23.8px"></i><i class="g" style="left:50.2px"></i><i class="g" style="left:76.6px"></i><i class="g" style="left:103.0px"></i>                    <span class="k">var</span> <span class="d">aArgs</span> = Array.<span class="p">prototype</span>.<span class="p">slice</span>.<span class="p">call</span>(arguments, 1)</div>
<div class="ln"><i class="g" style="left:-2.6px"></i><i class="g" style="left:23.8px"></i><i class="g" style="left:50.2px"></i><i class="g" style="left:76.6px"></i><i class="g" style="left:103.0px"></i>                      , <span class="d">fToBind</span> = <span class="k">this</span></div>
<div class="ln"><i class="g" style="left:-2.6px"></i><i class="g" style="left:23.8px"></i><i class="g" style="left:50.2px"></i><i class="g" style="left:76.6px"></i><i class="g" style="left:103.0px"></i>                      , <span class="d">fNOP</span> = <span class="k">function</span>() {}</div>
 </div>
</div>
<svg class="abs" style="left:330px;top:215px" width="336" height="42" viewBox="330 215 336 42"><rect x="336.4" y="221.5" width="321.6" height="28" rx="0.8" fill="none" stroke="#fe0000" stroke-width="4"/></svg>
<div id="vscroll">
 <svg class="abs" style="left:3px;top:6px" width="9" height="6" viewBox="0 0 9 6"><path d="M4.5 0 L9 6 H0 Z" fill="#9f9f9f"/></svg>
 <div id="vthumb"></div>
 <svg class="abs" style="left:3px;top:661px" width="9" height="6" viewBox="0 0 9 6"><path d="M4.5 6 L9 0 H0 Z" fill="#9f9f9f"/></svg>
</div>
<div id="hscroll">
 <svg class="abs" style="left:6px;top:3px" width="6" height="9" viewBox="0 0 6 9"><path d="M0 4.5 L6 0 V9 Z" fill="#9f9f9f"/></svg>
 <div id="hthumb"></div>
 <svg class="abs" style="left:749px;top:3px" width="6" height="9" viewBox="0 0 6 9"><path d="M6 4.5 L0 0 V9 Z" fill="#9f9f9f"/></svg>
 <div class="abs" style="left:760px;top:0;width:14px;height:15px;background:#2c2c2c"></div>
</div>
<div class="hline" style="top:713px"></div>
<div id="search">
 <svg class="abs" style="left:8px;top:7px" width="18" height="18" viewBox="0 0 18 18"><text x="0.6" y="7.4" font-family="Liberation Sans,sans-serif" font-size="8.8" fill="#dadada">A</text><text x="10.4" y="16.2" font-family="Liberation Sans,sans-serif" font-size="8.8" fill="#dadada">B</text><path d="M2.2 9.2 Q3 13 7.6 13.4 M5.6 11 L8.2 13.5 L5.2 15.2" fill="none" stroke="#dadada" stroke-width="1.1"/></svg>
 <div id="pill">
  <svg class="abs" style="left:9.6px;top:3.6px" width="13" height="13" viewBox="0 0 13 13"><circle cx="4.9" cy="4.9" r="4" fill="none" stroke="#c7c7c7" stroke-width="1"/><path d="M7.8 7.8 L11.8 11.8" stroke="#c7c7c7" stroke-width="1.1"/></svg>
  <span class="abs" style="left:30px;top:4px;color:#e3e3e3">actor.cxr</span>
  <svg class="abs" style="left:523px;top:5px" width="12" height="12" viewBox="0 0 12 12"><circle cx="6" cy="6" r="6" fill="#c7c7c7"/><path d="M3.8 3.8 L8.2 8.2 M8.2 3.8 L3.8 8.2" stroke="#333" stroke-width="1.1"/></svg>
  <span class="abs" style="left:543.5px;top:3.8px;font-size:9.5px;color:#c7c7c7;font-weight:bold;letter-spacing:-0.3px">Aa</span>
  <span class="abs" style="left:561.5px;top:3.6px;font-size:10.5px;color:#c7c7c7;border-bottom:1px solid #c7c7c7;line-height:10px;height:11.5px;padding:0 1px">ab</span>
  <span class="abs" style="left:583px;top:3.6px;font-size:10px;color:#d0d0d0;letter-spacing:-0.3px;-webkit-text-stroke:0.25px">(.*)</span>
 </div>
 <svg class="abs" style="left:651px;top:12px" width="12" height="8" viewBox="0 0 12 8"><path d="M0.7 7 L6 1.3 L11.3 7" fill="none" stroke="#757575" stroke-width="1.2"/></svg>
 <svg class="abs" style="left:679px;top:12px" width="12" height="8" viewBox="0 0 12 8"><path d="M0.7 1 L6 6.7 L11.3 1" fill="none" stroke="#757575" stroke-width="1.2"/></svg>
 <span class="abs" style="left:708px;top:8px;color:#e3e3e3">0 of 0</span>
 <svg class="abs" style="left:754px;top:10px" width="13" height="13" viewBox="0 0 13 13"><path d="M0.7 0.7 L12.3 12.3 M12.3 0.7 L0.7 12.3" stroke="#e3e3e3" stroke-width="1.2"/></svg>
</div>
<div class="hline" style="top:746px"></div>
<div id="status">
 <span class="abs" style="left:8.5px;top:4px;color:#7cacf8;font:bold 13px/16px 'Liberation Sans',sans-serif;letter-spacing:5px">{}</span>
 <span class="abs" style="left:35px;top:6.2px;color:#e3e3e3;letter-spacing:-0.18px">Line 4, Column 95</span>
 <span class="abs" style="left:680px;top:8px;color:#a8c7fa">Coverage: n/a</span>
</div>
</body></html>
